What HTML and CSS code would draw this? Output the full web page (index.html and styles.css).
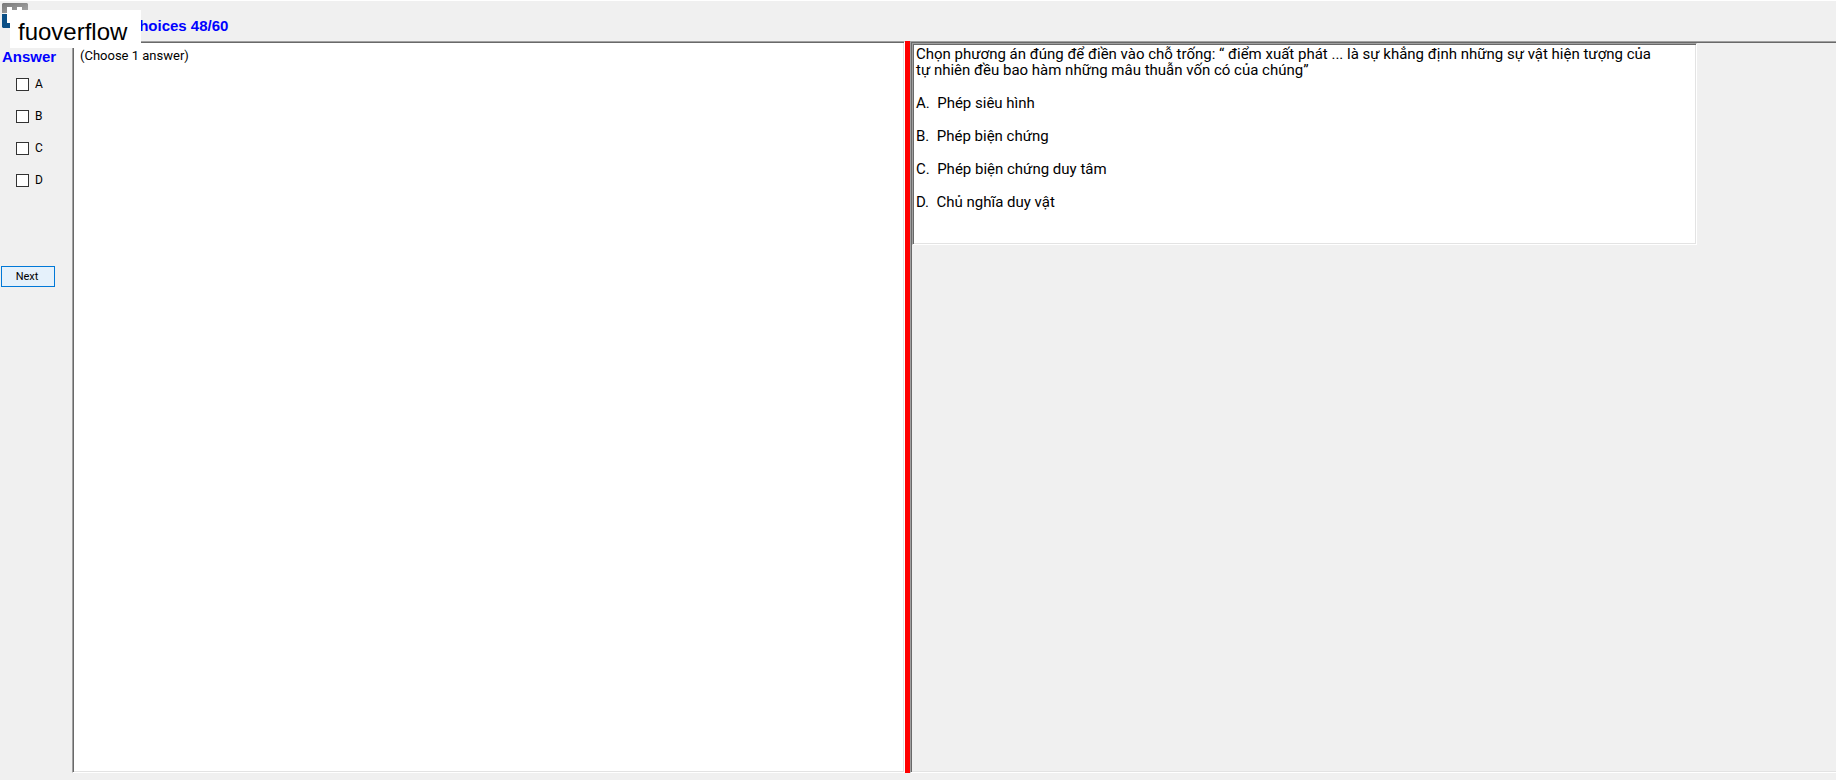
FILE: index.html
```html
<!DOCTYPE html>
<html lang="vi">
<head>
  <meta charset="UTF-8">
  <meta name="viewport" content="width=device-width, initial-scale=1.0">
  <title>Multiple choices 48/60</title>
  <link rel="stylesheet" href="styles.css">
</head>
<body>

<header class="topbar">
  <svg class="logo" viewBox="0 0 26 26" width="26" height="26" aria-hidden="true">
    <defs>
      <linearGradient id="steel" x1="0" y1="0" x2="1" y2="1">
        <stop offset="0" stop-color="#777"/>
        <stop offset="1" stop-color="#aaa"/>
      </linearGradient>
    </defs>
    <path fill="#fff" d="M4 3H21V22H4Z"/>
    <path fill="url(#steel)" d="M1 0H25L26 1V10H20V4H15V10H10V4H5V10H0V1Z"/>
    <path fill="#0b4f86" d="M0 11H5V20H20V11H26V24L25 25H1L0 24Z"/>
  </svg>
  <h1>Multiple choices 48/60</h1>
  <div class="watermark">fuoverflow</div>
</header>

<main class="exam">
  <form class="sidebar">
    <fieldset class="answers">
      <legend>Answer</legend>
      <label><input type="checkbox" name="answer" value="A">A</label>
      <label><input type="checkbox" name="answer" value="B">B</label>
      <label><input type="checkbox" name="answer" value="C">C</label>
      <label><input type="checkbox" name="answer" value="D">D</label>
    </fieldset>
    <button type="button" class="next">Next</button>
  </form>

  <section class="pane hint">(Choose 1 answer)</section>
  <div class="splitter"></div>

  <section class="pane viewer">
    <div class="question">
      <p>Chọn phương án đúng để điền vào chỗ trống: “ điểm xuất phát ... là sự khẳng định những sự vật hiện tượng của<br>tự nhiên đều bao hàm những mâu thuẫn vốn có của chúng”</p>
      <p>A.&nbsp; Phép siêu hình</p>
      <p>B.&nbsp; Phép biện chứng</p>
      <p>C.&nbsp; Phép biện chứng duy tâm</p>
      <p>D.&nbsp; Chủ nghĩa duy vật</p>
    </div>
  </section>
</main>

</body>
</html>
```
FILE: styles.css
```css
* {
  margin: 0;
  padding: 0;
  box-sizing: border-box;
}

body {
  display: flex;
  flex-direction: column;
  min-height: 100vh;
  background-color: #f0f0f0;
  border-top: 1px solid #fff;
  color: #000;
  font-family: Roboto, "Liberation Sans", sans-serif;
}

.topbar {
  position: relative;
  display: flex;
  height: 40px;
  padding: 2px;
}

.topbar h1,
.answers legend {
  font: bold 15px/18px "Liberation Sans", Arial, sans-serif;
  color: #0000ff;
}

.topbar h1 {
  margin-left: 42px;
  padding-top: 14px;
}

/* sits over the logo and the start of the title */
.watermark {
  position: absolute;
  top: 9px;
  left: 10px;
  width: 131px;
  height: 38px;
  padding-left: 8px;
  background-color: #fff;
  font-family: "Liberation Sans", Arial, sans-serif;
  font-size: 24px;
  line-height: 44px;
}

.exam {
  flex: 1;
  display: flex;
  padding-bottom: 7px;
}

.sidebar {
  flex: none;
  width: 72px;
}

.answers {
  border: none;
  padding-left: 16px;
  font-size: 12px;
}

.answers legend {
  margin-left: -14px;
  padding-top: 7px;
}

.answers label {
  display: flex;
  align-items: center;
  gap: 6px;
  height: 16px;
  margin: 10px 0 16px;
}

.answers label + label {
  margin-top: 16px;
}

.answers input {
  appearance: none;
  width: 13px;
  height: 13px;
  border: 1px solid #333;
  background-color: #fff;
}

.answers input:checked {
  background-color: #0078d7;
}

.next {
  width: 54px;
  height: 21px;
  margin: 62px 0 0 1px;
  padding-right: 2px;
  border: 1px solid #0078d7;
  background-color: #e5f1fb;
  color: #000;
  font-family: inherit;
  font-size: 11px;
}

/* sunken 3D edge: outer line is the border, inner line is the shadow */
.pane,
.question {
  border: 1px solid;
  border-color: #a0a0a0 #fff #fff #a0a0a0;
  box-shadow: inset 1px 1px #696969, inset -1px -1px #e3e3e3;
}

.hint {
  flex: 817;
  padding: 6px 7px;
  background-color: #fff;
  font-size: 13px;
  line-height: 16px;
}

.splitter {
  width: 5px;
  background-color: #ff0000;
}

.viewer {
  flex: 923;
  padding: 1px;
  border-right: none;
  box-shadow: inset 1px 1px #696969, inset 0 -1px #e3e3e3;
}

.question {
  width: 85%;
  min-height: 202px;
  padding: 2px 3px;
  background-color: #fff;
  font-size: 15px;
  line-height: 16px;
}

.question p {
  margin-bottom: 17px;
}
```
